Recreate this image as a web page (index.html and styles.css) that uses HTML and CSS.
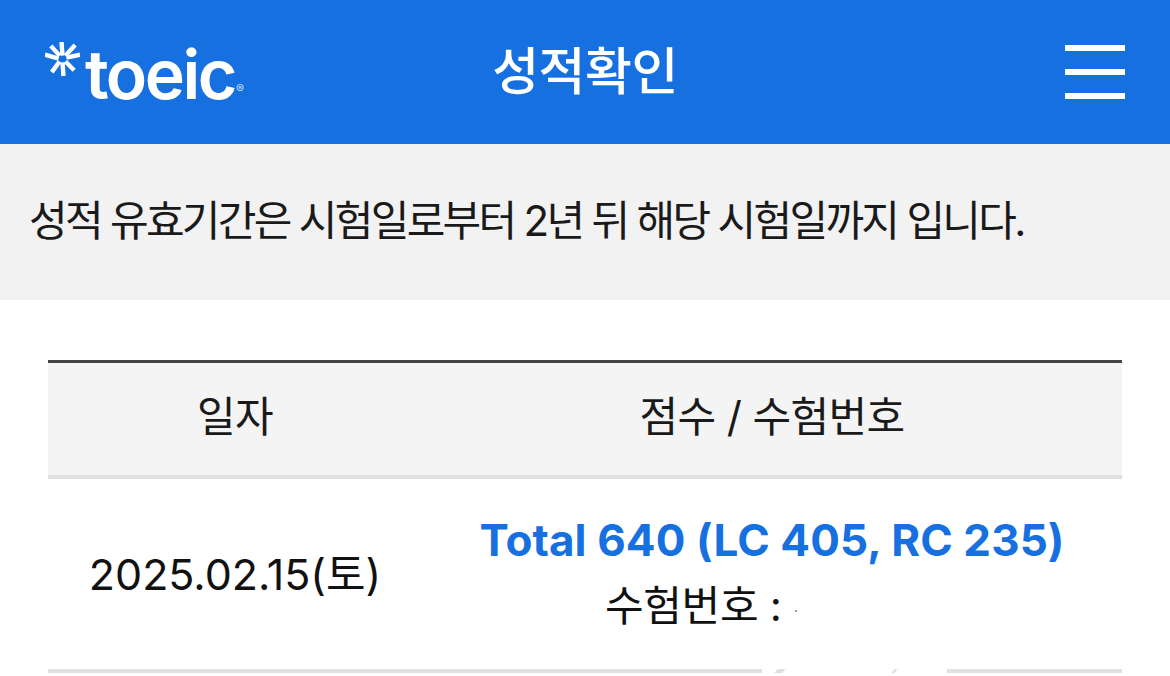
FILE: index.html
```html
<!DOCTYPE html>
<html lang="ko">
<head>
    <meta charset="UTF-8">
    <meta name="viewport" content="width=device-width, initial-scale=1.0">
    <title>성적확인 - TOEIC</title>
    <link rel="stylesheet" href="styles.css">
</head>
<body>
    <header class="top-bar">
        <a class="logo" href="#">
            <svg class="logo-mark" viewBox="0 0 36 36" width="35" height="35">
                <g stroke="#fff" stroke-width="4.5">
                    <path d="M17 0L18 14"/>
                    <path d="M18 21L19 35"/>
                    <path d="M0 13L14 17"/>
                    <path d="M22 16L36 13"/>
                    <path d="M6 4L15 14"/>
                    <path d="M31 3L21 14"/>
                    <path d="M7 31L15 20"/>
                    <path d="M30 29L21 20"/>
                </g>
            </svg>
            <span class="logo-text">toeic</span>
            <span class="logo-reg">®</span>
        </a>
        <h1 class="page-title">성적확인</h1>
        <button class="menu-btn" aria-label="메뉴">
            <span></span>
            <span></span>
            <span></span>
        </button>
    </header>

    <p class="notice">성적 유효기간은 시험일로부터 2년 뒤 해당 시험일까지 입니다.</p>

    <div class="score-wrap">
        <table class="score-table">
            <thead>
                <tr>
                    <th class="col-date">일자</th>
                    <th>점수 / 수험번호</th>
                </tr>
            </thead>
            <tbody>
                <tr>
                    <td class="exam-date">2025.02.15(토)</td>
                    <td>
                        <a class="score" href="#">Total 640 (LC 405, RC 235)</a>
                        <div class="exam-no">수험번호 : <span class="masked"></span></div>
                    </td>
                </tr>
            </tbody>
        </table>
        <div class="erase-mark"></div>
    </div>
</body>
</html>
```

FILE: styles.css
```css
html, body {
    height: 100%;
}

body {
    margin: 0;
    overflow: hidden;
    background: #fff;
    color: #1a1a1a;
    font-family: Inter, 'Noto Sans CJK KR', 'Noto Sans', sans-serif;
}

.top-bar {
    height: 144px;
    padding: 0 45px;
    background: #1770e0;
    display: flex;
    align-items: center;
    justify-content: space-between;
    position: relative;
}

.logo {
    display: flex;
    align-items: flex-start;
    width: 205px;
    height: 60px;
    color: #fff;
    text-decoration: none;
}

.logo-mark {
    flex: none;
}

.logo-text {
    margin: -8px 0 0 5px;
    font-family: Inter, 'Liberation Sans', sans-serif;
    font-size: 68px;
    font-weight: 600;
    line-height: 80px;
    letter-spacing: -2.5px;
}

.logo-reg {
    margin: 40px 0 0 1px;
    font-family: Inter, 'Liberation Sans', sans-serif;
    font-size: 12px;
    line-height: 14px;
    opacity: .75;
}

.page-title {
    margin: 0;
    position: absolute;
    left: 0;
    right: 0;
    top: 0;
    text-align: center;
    color: #fff;
    font-size: 51px;
    font-weight: 500;
    line-height: 144px;
    letter-spacing: -0.5px;
    pointer-events: none;
}

.menu-btn {
    display: flex;
    flex-direction: column;
    gap: 18px;
    width: 60px;
    padding: 0;
    border: 0;
    background: none;
}

.menu-btn span {
    display: block;
    height: 6px;
    background: #fff;
}

.notice {
    margin: 0;
    height: 156px;
    padding: 0 29px;
    background: #f2f2f2;
    font-size: 42px;
    font-weight: 400;
    line-height: 154px;
    letter-spacing: -2.7px;
    white-space: nowrap;
}

.score-wrap {
    margin: 60px 48px 0;
    position: relative;
}

.score-table {
    width: 100%;
    border-collapse: collapse;
    table-layout: fixed;
    border-top: 3px solid #444;
    font-size: 42px;
    line-height: 50px;
    letter-spacing: -0.6px;
}

.score-table th {
    height: 115px;
    padding: 0 0 3px;
    box-sizing: border-box;
    background: #f4f4f4;
    border-bottom: 4px solid #e0e0e0;
    font-weight: 400;
}

.col-date {
    width: 374px;
}

.score-table td {
    height: 190px;
    padding: 0;
    border-bottom: 4px solid #e0e0e0;
    text-align: center;
    color: #111;
}

.score-table .exam-date {
    font-size: 43px;
    letter-spacing: 0;
}

.score {
    display: block;
    margin-top: 2px;
    color: #1770e0;
    font-size: 44px;
    font-weight: 700;
    line-height: 52px;
    letter-spacing: 0.1px;
    text-decoration: none;
}

.exam-no {
    margin-top: 10px;
    line-height: 60px;
    letter-spacing: -0.3px;
}

.masked {
    display: inline-block;
    position: relative;
    width: 146px;
    height: 1px;
}

/* 가림 처리 후 남은 점 */
.masked::before {
    content: "";
    position: absolute;
    left: 2px;
    top: -10px;
    width: 2px;
    height: 2px;
    background: #999;
}

.erase-mark {
    position: absolute;
    left: 714px;
    top: 309px;
    width: 185px;
    height: 8px;
    background: #fff;
}

.erase-mark::before,
.erase-mark::after {
    content: "";
    position: absolute;
    top: 0;
    height: 4px;
    background: #e0e0e0;
    transform: skewX(-40deg);
}

.erase-mark::before {
    left: 14px;
    width: 8px;
}

.erase-mark::after {
    left: 131px;
    width: 3px;
}
```
